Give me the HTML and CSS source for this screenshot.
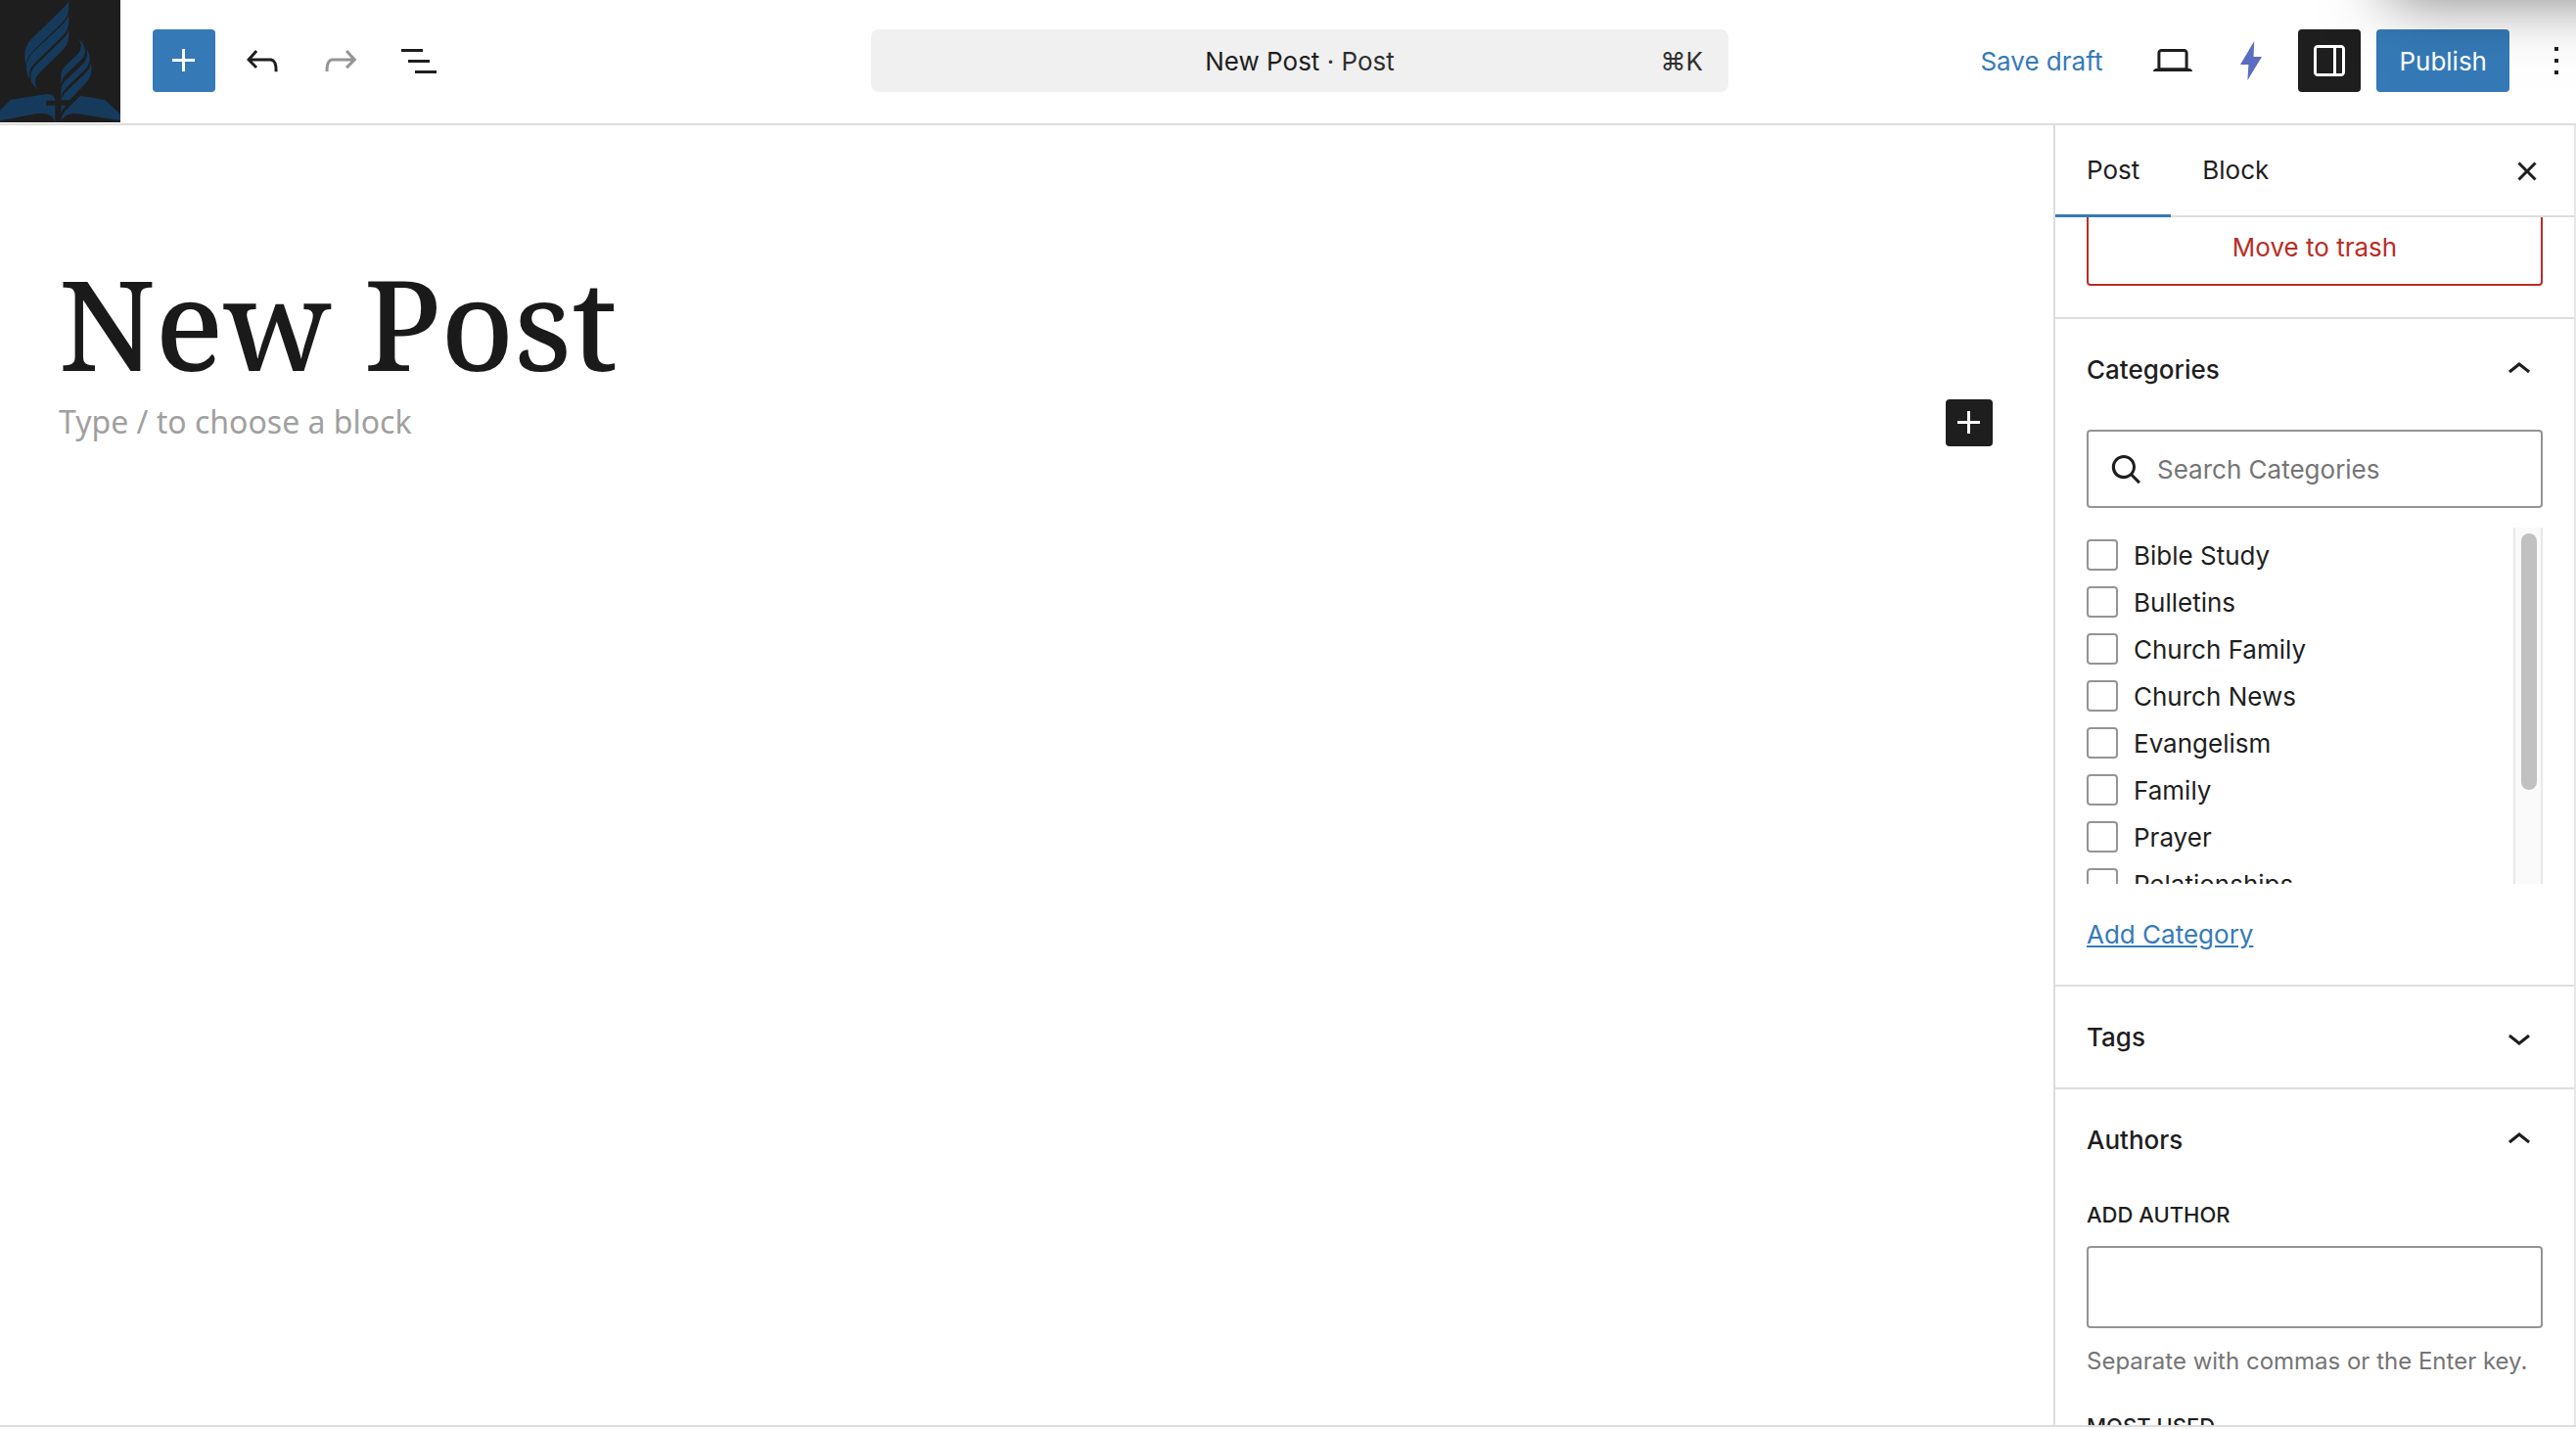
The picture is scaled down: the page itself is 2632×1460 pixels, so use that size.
FILE: index.html
```html
<!DOCTYPE html>
<html lang="en">
<head>
  <meta charset="UTF-8">
  <meta name="viewport" content="width=device-width, initial-scale=1.0">
  <title>New Post</title>
  <link rel="stylesheet" href="styles.css">
</head>
<body>
  <header class="toolbar">
    <a href="#" class="site-logo" aria-label="View posts">
      <svg viewBox="0 0 369 375">
        <path d="M211 0V18C211 50 200 60 180 80L110 148C92 166 82 180 79 198C72 165 76 142 96 120L186 32C198 20 208 14 211 0Z"/>
        <path d="M211 42V60C211 92 200 102 182 120L118 182C98 200 88 212 90 243C78 220 76 196 92 172C98 162 106 156 112 150L186 80C200 66 208 58 211 42Z"/>
        <path d="M211 87V105C211 132 202 144 186 160L128 216C106 236 102 254 116 273C96 260 88 240 98 216C102 208 108 202 114 196L188 124C202 110 209 102 211 87Z"/>
        <path d="M240 118C262 138 268 160 252 180L206 224C196 234 190 244 187 262V232C187 218 192 210 202 200L236 168C252 152 252 136 240 118Z"/>
        <path d="M265 150C282 172 276 196 260 214L204 268C194 278 188 290 187 306V276C188 262 194 254 204 244L250 200C266 184 270 170 265 150Z"/>
        <path d="M278 193C286 222 276 240 262 256L214 307H187C189 296 196 288 204 280L258 228C272 214 278 206 278 193Z"/>
        <path d="M0 338L32 306L130 290C152 286 168 290 169 308H142V323H169V374C162 350 140 345 110 349L0 370Z"/>
        <path d="M187 323H203C194 332 188 340 187 350Z"/>
        <path d="M247 293L322 306L369 350V370L250 350C220 344 196 350 187 374C187 355 196 342 210 329Z"/>
      </svg>
    </a>

    <div class="tools">
      <button class="icon-btn primary" aria-label="Toggle block inserter">
        <svg viewBox="0 0 24 24"><path d="M11 12.5V17.5H12.5V12.5H17.5V11H12.5V6H11V11H6V12.5H11Z"/></svg>
      </button>
      <button class="icon-btn" aria-label="Undo">
        <svg viewBox="0 0 24 24"><path d="M18.3 11.7c-.6-.6-1.4-.9-2.3-.9H6.7l2.9-3.3-1.1-1-4.5 5L8.5 16l1-1-2.7-2.7H16c.5 0 .9.2 1.3.5 1 1 1 3.4 1 4.5v.3h1.5v-.2c0-1.5 0-4.3-1.5-5.7z"/></svg>
      </button>
      <button class="icon-btn disabled" aria-label="Redo" disabled>
        <svg viewBox="0 0 24 24"><path d="M15.6 6.5l-1.1 1 2.9 3.3H8c-.9 0-1.7.3-2.3.9-1.4 1.5-1.4 4.2-1.4 5.6v.2h1.5v-.3c0-1.1 0-3.5 1-4.5.3-.3.7-.5 1.3-.5h9.2L14.5 15l1.1 1.1 4.6-4.6-4.6-5z"/></svg>
      </button>
      <button class="icon-btn" aria-label="Document overview">
        <svg viewBox="0 0 24 24"><path d="M3 6h11v1.5H3V6Zm3.5 5.5h11V13h-11v-1.5ZM21 17H10v1.5h11V17Z"/></svg>
      </button>
    </div>

    <button class="command-bar">
      <span class="command-title">New Post <span class="muted">· Post</span></span>
      <span class="shortcut">⌘K</span>
    </button>

    <div class="actions">
      <button class="save-draft">Save draft</button>
      <button class="icon-btn" aria-label="View">
        <svg viewBox="0 0 24 24"><path d="M20.5 16h-.7V8c0-1.1-.9-2-2-2H6.2c-1.1 0-2 .9-2 2v8h-.7c-.8 0-1.5.7-1.5 1.5h20c0-.8-.7-1.5-1.5-1.5zM5.7 8c0-.3.2-.5.5-.5h11.6c.3 0 .5.2.5.5v7.6H5.7V8z"/></svg>
      </button>
      <button class="icon-btn bolt" aria-label="Performance">
        <svg viewBox="0 0 24 24"><path d="M13.6 2L6.5 14H10.7L10.2 22L17.5 10H13.3Z"/></svg>
      </button>
      <button class="icon-btn dark" aria-label="Settings">
        <svg viewBox="0 0 24 24"><path d="M18 4H6c-1.1 0-2 .9-2 2v12c0 1.1.9 2 2 2h12c1.1 0 2-.9 2-2V6c0-1.1-.9-2-2-2zm-4 14.5H6c-.3 0-.5-.2-.5-.5V6c0-.3.2-.5.5-.5h8v13zm4.5-.5c0 .3-.2.5-.5.5h-2.500v-13H18c.3 0 .5.2.5.5v12z"/></svg>
      </button>
      <button class="publish">Publish</button>
      <button class="icon-btn options" aria-label="Options">
        <svg viewBox="0 0 24 24"><path d="M13 19h-2v-2h2v2zm0-6h-2v-2h2v2zm0-6h-2V5h2v2z"/></svg>
      </button>
    </div>
    <div class="window-shadow"></div>
  </header>

  <div class="workspace">
    <main class="editor">
      <h1 class="post-title">New Post</h1>
      <div class="block-row">
        <p class="placeholder">Type / to choose a block</p>
        <button class="add-block" aria-label="Add block">
          <svg viewBox="0 0 24 24"><path d="M11 12.5V17.5H12.5V12.5H17.5V11H12.5V6H11V11H6V12.5H11Z"/></svg>
        </button>
      </div>
    </main>

    <aside class="sidebar">
      <div class="tabs">
        <button class="tab active">Post</button>
        <button class="tab">Block</button>
        <button class="close" aria-label="Close settings">
          <svg viewBox="0 0 24 24"><path d="M12 13.06l3.712 3.713 1.061-1.06L13.061 12l3.712-3.712-1.06-1.06L12 10.938 8.288 7.227l-1.061 1.06L10.939 12l-3.712 3.712 1.06 1.061L12 13.061z"/></svg>
        </button>
      </div>

      <div class="panels">
        <section class="panel summary">
          <button class="trash">Move to trash</button>
        </section>

        <section class="panel categories">
          <h2>
            <button class="panel-toggle">Categories
              <svg viewBox="0 0 24 24"><path d="M6.5 12.4L12 8l5.5 4.4-.9 1.2L12 10l-4.5 3.6-1-1.2z"/></svg>
            </button>
          </h2>
          <div class="search">
            <svg viewBox="0 0 24 24"><path d="M13 5c-3.3 0-6 2.7-6 6 0 1.4.5 2.7 1.3 3.7l-3.8 3.8 1.1 1.1 3.8-3.8c1 .8 2.3 1.3 3.7 1.3 3.3 0 6-2.7 6-6S16.3 5 13 5zm0 10.5c-2.5 0-4.5-2-4.5-4.5s2-4.5 4.5-4.5 4.5 2 4.5 4.5-2 4.5-4.5 4.5z"/></svg>
            <input type="search" placeholder="Search Categories" aria-label="Search Categories">
          </div>
          <div class="category-box">
            <div class="category-list">
              <label><input type="checkbox">Bible Study</label>
              <label><input type="checkbox">Bulletins</label>
              <label><input type="checkbox">Church Family</label>
              <label><input type="checkbox">Church News</label>
              <label><input type="checkbox">Evangelism</label>
              <label><input type="checkbox">Family</label>
              <label><input type="checkbox">Prayer</label>
              <label><input type="checkbox">Relationships</label>
            </div>
            <div class="scroll-track"><div class="scroll-thumb"></div></div>
          </div>
          <a href="#" class="add-category">Add Category</a>
        </section>

        <section class="panel">
          <h2>
            <button class="panel-toggle">Tags
              <svg viewBox="0 0 24 24"><path d="M17.5 11.6L12 16l-5.5-4.4.9-1.2L12 14l4.5-3.6 1 1.2z"/></svg>
            </button>
          </h2>
        </section>

        <section class="panel">
          <h2>
            <button class="panel-toggle">Authors
              <svg viewBox="0 0 24 24"><path d="M6.5 12.4L12 8l5.5 4.4-.9 1.2L12 10l-4.5 3.6-1-1.2z"/></svg>
            </button>
          </h2>
          <label class="field-label" for="author">Add author</label>
          <input type="text" id="author" class="author-input">
          <p class="help">Separate with commas or the Enter key.</p>
          <h3 class="field-label">Most used</h3>
        </section>
      </div>
    </aside>
  </div>
</body>
</html>
```

FILE: styles.css
```css
* {
  box-sizing: border-box;
}
body {
  display: flex;
  flex-direction: column;
  height: 100vh;
  margin: 0;
  padding-bottom: 2px;
  overflow: hidden;
  background: #fff;
  color: #1e1e1e;
  font-family: Inter, "Liberation Sans", sans-serif;
  font-size: 26px;
  line-height: 36px;
}
button, input {
  font: inherit;
  color: inherit;
}
button {
  padding: 0;
  border: 0;
  background: none;
  cursor: pointer;
}
svg {
  display: block;
  width: 48px;
  height: 48px;
  fill: currentColor;
}
h1, h2, h3, p {
  margin: 0;
}

/* top bar */
.toolbar {
  position: relative;
  display: grid;
  grid-template-columns: 1fr 876px 1fr;
  grid-template-rows: 124px;
  align-items: center;
  flex: none;
  height: 128px;
  border-bottom: 2px solid #ddd;
  overflow: hidden;
}
.site-logo {
  grid-area: 1 / 1;
  align-self: start;
  width: 123px;
  height: 125px;
  background: #1e1e1e;
  color: #163a5c;
}
.site-logo svg {
  width: 100%;
  height: 100%;
}
.tools {
  grid-area: 1 / 1;
  display: flex;
  gap: 16px;
  margin-left: 156px;
}
.icon-btn {
  display: flex;
  align-items: center;
  justify-content: center;
  flex: none;
  width: 64px;
  height: 64px;
  border-radius: 4px;
}
.primary, .publish {
  background: #357ab7;
  color: #fff;
}
.disabled {
  color: #949494;
}
.dark {
  background: #1e1e1e;
  color: #fff;
}
.bolt {
  color: #5b6dc0;
}
.command-bar {
  display: grid;
  grid-template-columns: 1fr auto 1fr;
  align-items: center;
  width: 876px;
  height: 64px;
  margin-left: 12px;
  padding: 2px 26px 0;
  border-radius: 8px;
  background: #f0f0f0;
}
.command-title {
  grid-column: 2;
}
.muted, .shortcut {
  color: #2f2f2f;
}
.shortcut {
  text-align: right;
}
.actions {
  display: flex;
  justify-content: flex-end;
  gap: 16px;
  margin-right: -12px;
}
.save-draft {
  padding: 2px 24px 0;
  color: #357ab7;
}
.publish {
  height: 64px;
  padding: 2px 23px 0;
  border-radius: 4px;
}
.window-shadow {
  position: absolute;
  top: -200px;
  right: -200px;
  width: 392px;
  height: 200px;
  box-shadow: 0 0 60px rgba(0, 0, 0, 0.5);
  pointer-events: none;
}

/* editor canvas */
.workspace {
  display: flex;
  flex: 1;
  min-height: 0;
  border-bottom: 2px solid #ddd;
}
.editor {
  flex: 1;
  padding: 124px 62px 0 60px;
}
.post-title {
  color: #1a1a1a;
  font-family: "Noto Serif", "DejaVu Serif Condensed", "DejaVu Serif", serif;
  font-size: 128px;
  font-weight: 500;
  line-height: 156px;
}
.block-row {
  display: flex;
  align-items: flex-start;
  justify-content: space-between;
}
.placeholder {
  color: #a0a0a0;
  font-family: "Noto Sans", sans-serif;
  font-size: 32px;
  line-height: 45px;
}
.add-block {
  border-radius: 4px;
  background: #1e1e1e;
  color: #fff;
}

/* settings sidebar */
.sidebar {
  display: flex;
  flex-direction: column;
  width: 534px;
  border-left: 2px solid #ddd;
  border-right: 2px solid #e8e8e8;
}
.tabs {
  display: flex;
  flex: none;
  height: 94px;
  padding-right: 24px;
  box-shadow: inset 0 -2px #ddd;
}
.tab {
  padding: 0 32px 2px;
}
.tab.active {
  box-shadow: inset 0 -3px #357ab7;
}
.close {
  margin-left: auto;
}
.panels {
  flex: 1;
  min-height: 0;
  overflow: hidden;
}
.panel {
  padding: 0 32px;
  border-bottom: 2px solid #ddd;
}
/* scrolled so that only the end of the summary shows */
.summary {
  margin-top: -10px;
  padding-bottom: 32px;
}
.trash {
  display: block;
  width: 100%;
  height: 80px;
  padding-top: 2px;
  border: 2px solid #b92d25;
  border-radius: 4px;
  color: #b92d25;
}
.panel h2 {
  font-size: 26px;
}
.panel-toggle {
  display: flex;
  align-items: center;
  justify-content: space-between;
  width: 100%;
  height: 103px;
  font-weight: 500;
}
.categories {
  padding-bottom: 33px;
}
.search {
  display: flex;
  align-items: center;
  height: 80px;
  margin-top: 10px;
  padding: 0 14px;
  border: 2px solid #949494;
  border-radius: 4px;
}
.search svg {
  transform: scaleX(-1);
}
.search input {
  flex: 1;
  min-width: 0;
  padding: 2px 8px 0;
  border: 0;
  outline: 0;
  background: none;
}
.search input::placeholder {
  color: #757575;
}
.category-box {
  display: flex;
  height: 364px;
  margin: 20px 0 34px;
  overflow: hidden;
}
.category-list {
  flex: 1;
  padding-top: 12px;
}
.category-list label {
  display: flex;
  gap: 16px;
  height: 32px;
  margin-bottom: 16px;
  line-height: 34px;
}
.category-list input {
  appearance: none;
  width: 32px;
  height: 32px;
  margin: 0;
  border: 2px solid #949494;
  border-radius: 4px;
}
.scroll-track {
  width: 30px;
  padding: 6px 4px 6px 6px;
  border: solid #e8e8e8;
  border-width: 0 2px;
  background: #fafafa;
}
.scroll-thumb {
  height: 262px;
  border-radius: 8px;
  background: #c1c1c1;
}
.add-category {
  display: block;
  color: #357ab7;
}
.field-label {
  display: block;
  margin-top: 9px;
  font-size: 22px;
  font-weight: 500;
  line-height: 32px;
  text-transform: uppercase;
}
.author-input {
  display: block;
  width: 100%;
  height: 84px;
  margin: 16px 0;
  padding: 0 16px;
  border: 2px solid #949494;
  border-radius: 4px;
}
.help {
  margin-bottom: 32px;
  color: #757575;
  font-size: 24px;
}
```
